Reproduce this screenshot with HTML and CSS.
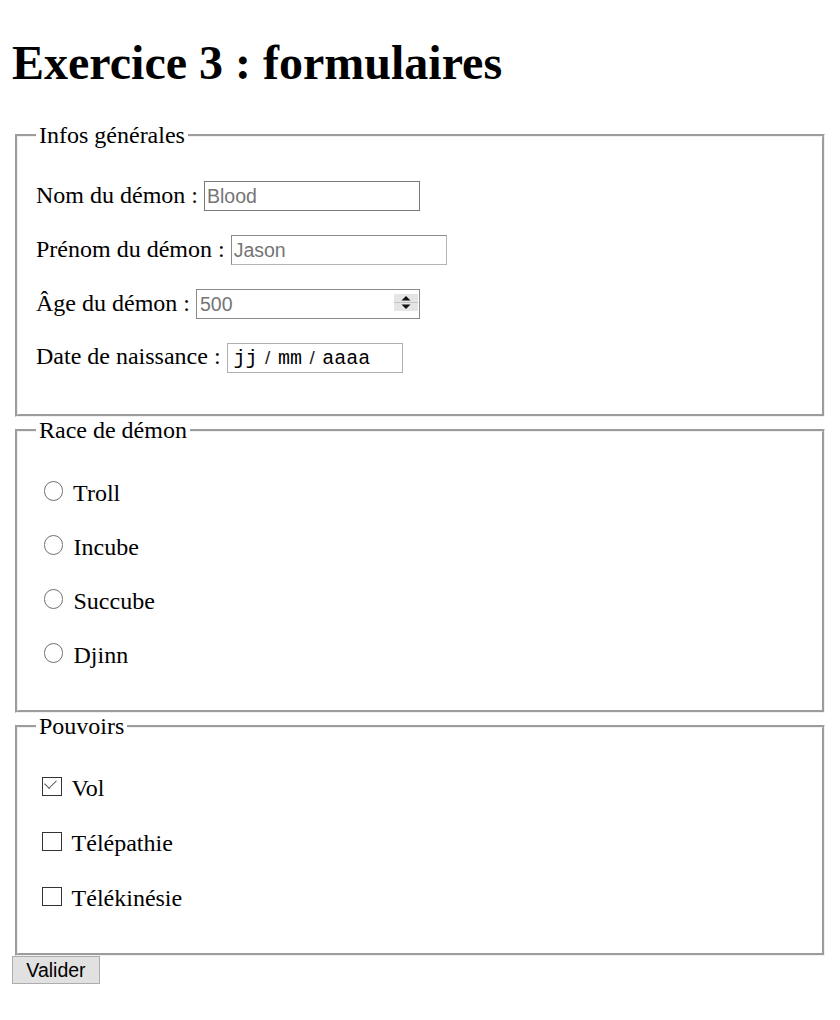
FILE: index.html
```html
<!DOCTYPE html>
<html lang="fr">
<head>
<meta charset="utf-8">
<title>Exercice 3 : formulaires</title>
<link rel="stylesheet" href="styles.css">
</head>
<body>
<h1 class="title">Exercice 3 : formulaires</h1>
<form class="form">
  <fieldset class="group">
    <legend class="legend">Infos générales</legend>
    <p class="row"><label for="nom">Nom du démon :</label> <input class="field w-nom" type="text" id="nom" placeholder="Blood"></p>
    <p class="row"><label for="prenom">Prénom du démon :</label> <input class="field w-prenom" type="text" id="prenom" placeholder="Jason"></p>
    <p class="row"><label for="age">Âge du démon :</label> <span class="num"><input class="num-input" type="text" id="age" placeholder="500"><span class="spin"><svg width="24" height="17" viewBox="0 0 24 17"><rect x="0" y="0" width="24" height="17" fill="#e5e5e5"/><rect x="0" y="8" width="24" height="1" fill="#c4c4c4"/><path d="M7.5 6.5 L12 2 L16.5 6.5 Z" fill="#111"/><path d="M7.5 10.5 L16.5 10.5 L12 15 Z" fill="#111"/></svg></span></span></p>
    <p class="row"><label for="date">Date de naissance :</label> <span class="date" id="date"><span class="mono">jj</span><span class="sep">/</span><span class="mono">mm</span><span class="sep">/</span><span class="mono">aaaa</span></span></p>
  </fieldset>
  <fieldset class="group">
    <legend class="legend">Race de démon</legend>
    <p class="row"><input class="radio" type="radio" name="race" id="r1"> <label for="r1">Troll</label></p>
    <p class="row"><input class="radio" type="radio" name="race" id="r2"> <label for="r2">Incube</label></p>
    <p class="row"><input class="radio" type="radio" name="race" id="r3"> <label for="r3">Succube</label></p>
    <p class="row"><input class="radio" type="radio" name="race" id="r4"> <label for="r4">Djinn</label></p>
  </fieldset>
  <fieldset class="group group-check">
    <legend class="legend">Pouvoirs</legend>
    <p class="row row-check"><input class="check" type="checkbox" id="c1" checked> <label for="c1">Vol</label></p>
    <p class="row row-check"><input class="check" type="checkbox" id="c2"> <label for="c2">Télépathie</label></p>
    <p class="row row-check"><input class="check" type="checkbox" id="c3"> <label for="c3">Télékinésie</label></p>
  </fieldset>
  <button class="submit" type="submit">Valider</button>
</form>
</body>
</html>
```

FILE: styles.css
```css
html { background: #fff; }
body {
  margin: 12px;
  font-family: "Liberation Serif", "Times New Roman", serif;
  font-size: 24px;
  color: #000;
}
.title {
  font-size: 48px;
  font-weight: bold;
  margin: 23px 0 32px;
}
.form { margin: 0; }
.group {
  margin: 0 3px;
  border: 3px groove #f0f0f0;
  padding: 8.4px 18px 17px;
}
.group-check {
  padding-top: 7.4px;
  padding-bottom: 16px;
}
.legend {
  padding: 0 3px;
}
.row {
  margin: 24px 0;
}
.row-check {
  margin: 25px 0;
}
.field {
  box-sizing: border-box;
  height: 30px;
  border: 1px solid #7a7a7a;
  padding: 0 2px;
  font: 19.5px "Liberation Sans", Arial, sans-serif;
  color: #000;
  background: #fff;
  margin: 0;
}
.field::placeholder, .num-input::placeholder { color: #757575; }
.w-nom { width: 216px; }
.w-prenom { width: 216px; border-color: #8a8a8a #b4b4b4 #b4b4b4 #8a8a8a; }
.num {
  display: inline-flex;
  box-sizing: border-box;
  width: 224px;
  height: 30px;
  border: 1px solid #8a8a8a;
  background: #fff;
}
.num-input {
  flex: 1;
  min-width: 0;
  border: 0;
  padding: 0 3px;
  margin: 0;
  font: 19.5px "Liberation Sans", Arial, sans-serif;
  background: transparent;
  outline: none;
}
.spin {
  display: block;
  width: 24px;
  height: 17px;
  margin: 4px 1px 0 0;
  flex: none;
}
.spin svg { display: block; }
.date {
  display: inline-flex;
  align-items: baseline;
  box-sizing: border-box;
  width: 176px;
  height: 30px;
  border: 1px solid #b0b0b0;
  padding: 3px 0 0 6px;
  font: 19.5px "Liberation Sans", Arial, sans-serif;
  color: #000;
}
.mono {
  font-family: "Liberation Mono", "Courier New", monospace;
  font-size: 20px;
}
.sep {
  margin: 0 7.5px;
  font-size: 19px;
  color: #222;
}
.radio {
  appearance: none;
  -webkit-appearance: none;
  box-sizing: border-box;
  width: 19.5px;
  height: 19.5px;
  margin: 4.5px 4.5px 0 7.5px;
  border: 1.6px solid #6f6f6f;
  border-radius: 50%;
  background: #fff;
  vertical-align: baseline;
}
.check {
  appearance: none;
  -webkit-appearance: none;
  position: relative;
  box-sizing: border-box;
  width: 19.5px;
  height: 19.5px;
  margin: 4.5px 4.5px 0 6px;
  border: 1px solid #333;
  background: #fff;
  vertical-align: baseline;
}
.check:checked::after {
  content: "";
  position: absolute;
  left: 4.2px;
  top: -0.2px;
  width: 7px;
  height: 11px;
  box-sizing: border-box;
  border-right: 1.8px solid #4a4a4a;
  border-bottom: 1.8px solid #4a4a4a;
  transform: rotate(45deg);
}
.submit {
  display: block;
  box-sizing: border-box;
  width: 88px;
  height: 28px;
  margin: 0;
  padding: 0;
  background: #e1e1e1;
  border: 1px solid #adadad;
  font: 19.5px "Liberation Sans", Arial, sans-serif;
  color: #000;
}
```
